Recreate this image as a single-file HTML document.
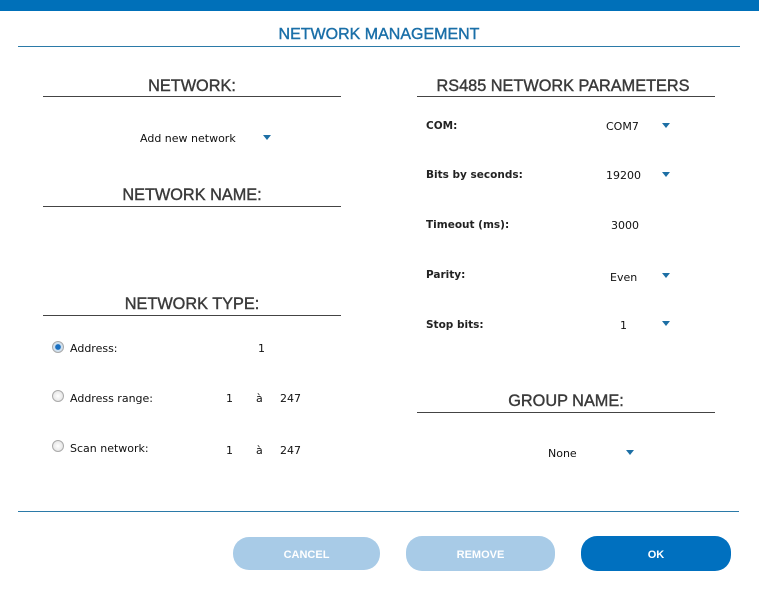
<!DOCTYPE html>
<html><head><meta charset="utf-8"><style>
body{margin:0;width:759px;height:593px;background:#fff;position:relative;overflow:hidden;font-family:"DejaVu Sans","Liberation Sans",sans-serif;}
.a{position:absolute;white-space:nowrap;}
.t{font-size:11px;color:#111;}
.b{font-weight:bold;font-size:10.5px;color:#222;}
.h{font-family:"Liberation Sans",sans-serif;font-size:16.3px;color:#3a3a3a;-webkit-text-stroke:0.4px #3a3a3a;transform:translateX(-50%);}
.ln{position:absolute;height:1px;background:#444;}
.tri{position:absolute;width:0;height:0;border-left:4px solid transparent;border-right:4px solid transparent;border-top:5px solid #1d6fa5;}
.r{position:absolute;width:10px;height:10px;border-radius:50%;border:1px solid #aaa;background:radial-gradient(#fff,#ddd);}
.btn{position:absolute;border-radius:16px;color:#fff;font-family:"Liberation Sans",sans-serif;font-size:11px;font-weight:bold;text-align:center;}
</style></head><body>
<div style="position:absolute;left:0;top:0;width:759px;height:11px;background:#0070b9"></div>
<div class="a" style="left:379px;top:26px;transform:translateX(-50%);font-family:'Liberation Sans',sans-serif;font-size:16px;color:#1a6fa8;-webkit-text-stroke:0.4px #1a6fa8">NETWORK MANAGEMENT</div>
<div class="ln" style="left:18px;top:46px;width:722px;background:#2b7aa8"></div>

<div class="a h" style="left:192px;top:77px">NETWORK:</div>
<div class="ln" style="left:43px;top:96px;width:298px"></div>
<div class="a t" style="left:140px;top:132px">Add new network</div>
<div class="tri" style="left:263px;top:135px"></div>

<div class="a h" style="left:192px;top:186px">NETWORK NAME:</div>
<div class="ln" style="left:43px;top:206px;width:298px"></div>

<div class="a h" style="left:192px;top:295px">NETWORK TYPE:</div>
<div class="ln" style="left:43px;top:315px;width:298px"></div>

<div class="r" style="left:52px;top:341px;background:radial-gradient(#1a6fc0 35%,#cfe0ef 45%)"></div>
<div class="a t" style="left:70px;top:342px">Address:</div>
<div class="a t" style="left:258px;top:342px">1</div>
<div class="r" style="left:52px;top:390px"></div>
<div class="a t" style="left:70px;top:392px">Address range:</div>
<div class="a t" style="left:226px;top:392px">1</div>
<div class="a t" style="left:256px;top:392px">à</div>
<div class="a t" style="left:280px;top:392px">247</div>
<div class="r" style="left:52px;top:440px"></div>
<div class="a t" style="left:70px;top:442px">Scan network:</div>
<div class="a t" style="left:226px;top:444px">1</div>
<div class="a t" style="left:256px;top:444px">à</div>
<div class="a t" style="left:280px;top:444px">247</div>

<div class="a h" style="left:563px;top:77px">RS485 NETWORK PARAMETERS</div>
<div class="ln" style="left:417px;top:96px;width:298px"></div>
<div class="a b" style="left:426px;top:120px">COM:</div>
<div class="a t" style="left:606px;top:120px">COM7</div>
<div class="tri" style="left:662px;top:123px"></div>
<div class="a b" style="left:426px;top:169px">Bits by seconds:</div>
<div class="a t" style="left:606px;top:169px">19200</div>
<div class="tri" style="left:662px;top:172px"></div>
<div class="a b" style="left:426px;top:219px">Timeout (ms):</div>
<div class="a t" style="left:611px;top:219px">3000</div>
<div class="a b" style="left:426px;top:269px">Parity:</div>
<div class="a t" style="left:610px;top:271px">Even</div>
<div class="tri" style="left:662px;top:273px"></div>
<div class="a b" style="left:426px;top:319px">Stop bits:</div>
<div class="a t" style="left:620px;top:319px">1</div>
<div class="tri" style="left:662px;top:321px"></div>

<div class="a h" style="left:566px;top:392px">GROUP NAME:</div>
<div class="ln" style="left:417px;top:412px;width:298px"></div>
<div class="a t" style="left:548px;top:447px">None</div>
<div class="tri" style="left:626px;top:450px"></div>

<div class="ln" style="left:18px;top:511px;width:721px;background:#2b7aa8"></div>
<div class="btn" style="left:233px;top:537px;width:147px;height:33px;line-height:37px;background:#a8cbe7">CANCEL</div>
<div class="btn" style="left:406px;top:536px;width:149px;height:35px;line-height:39px;background:#a8cbe7">REMOVE</div>
<div class="btn" style="left:581px;top:536px;width:150px;height:35px;line-height:39px;background:#0070bf">OK</div>
</body></html>
